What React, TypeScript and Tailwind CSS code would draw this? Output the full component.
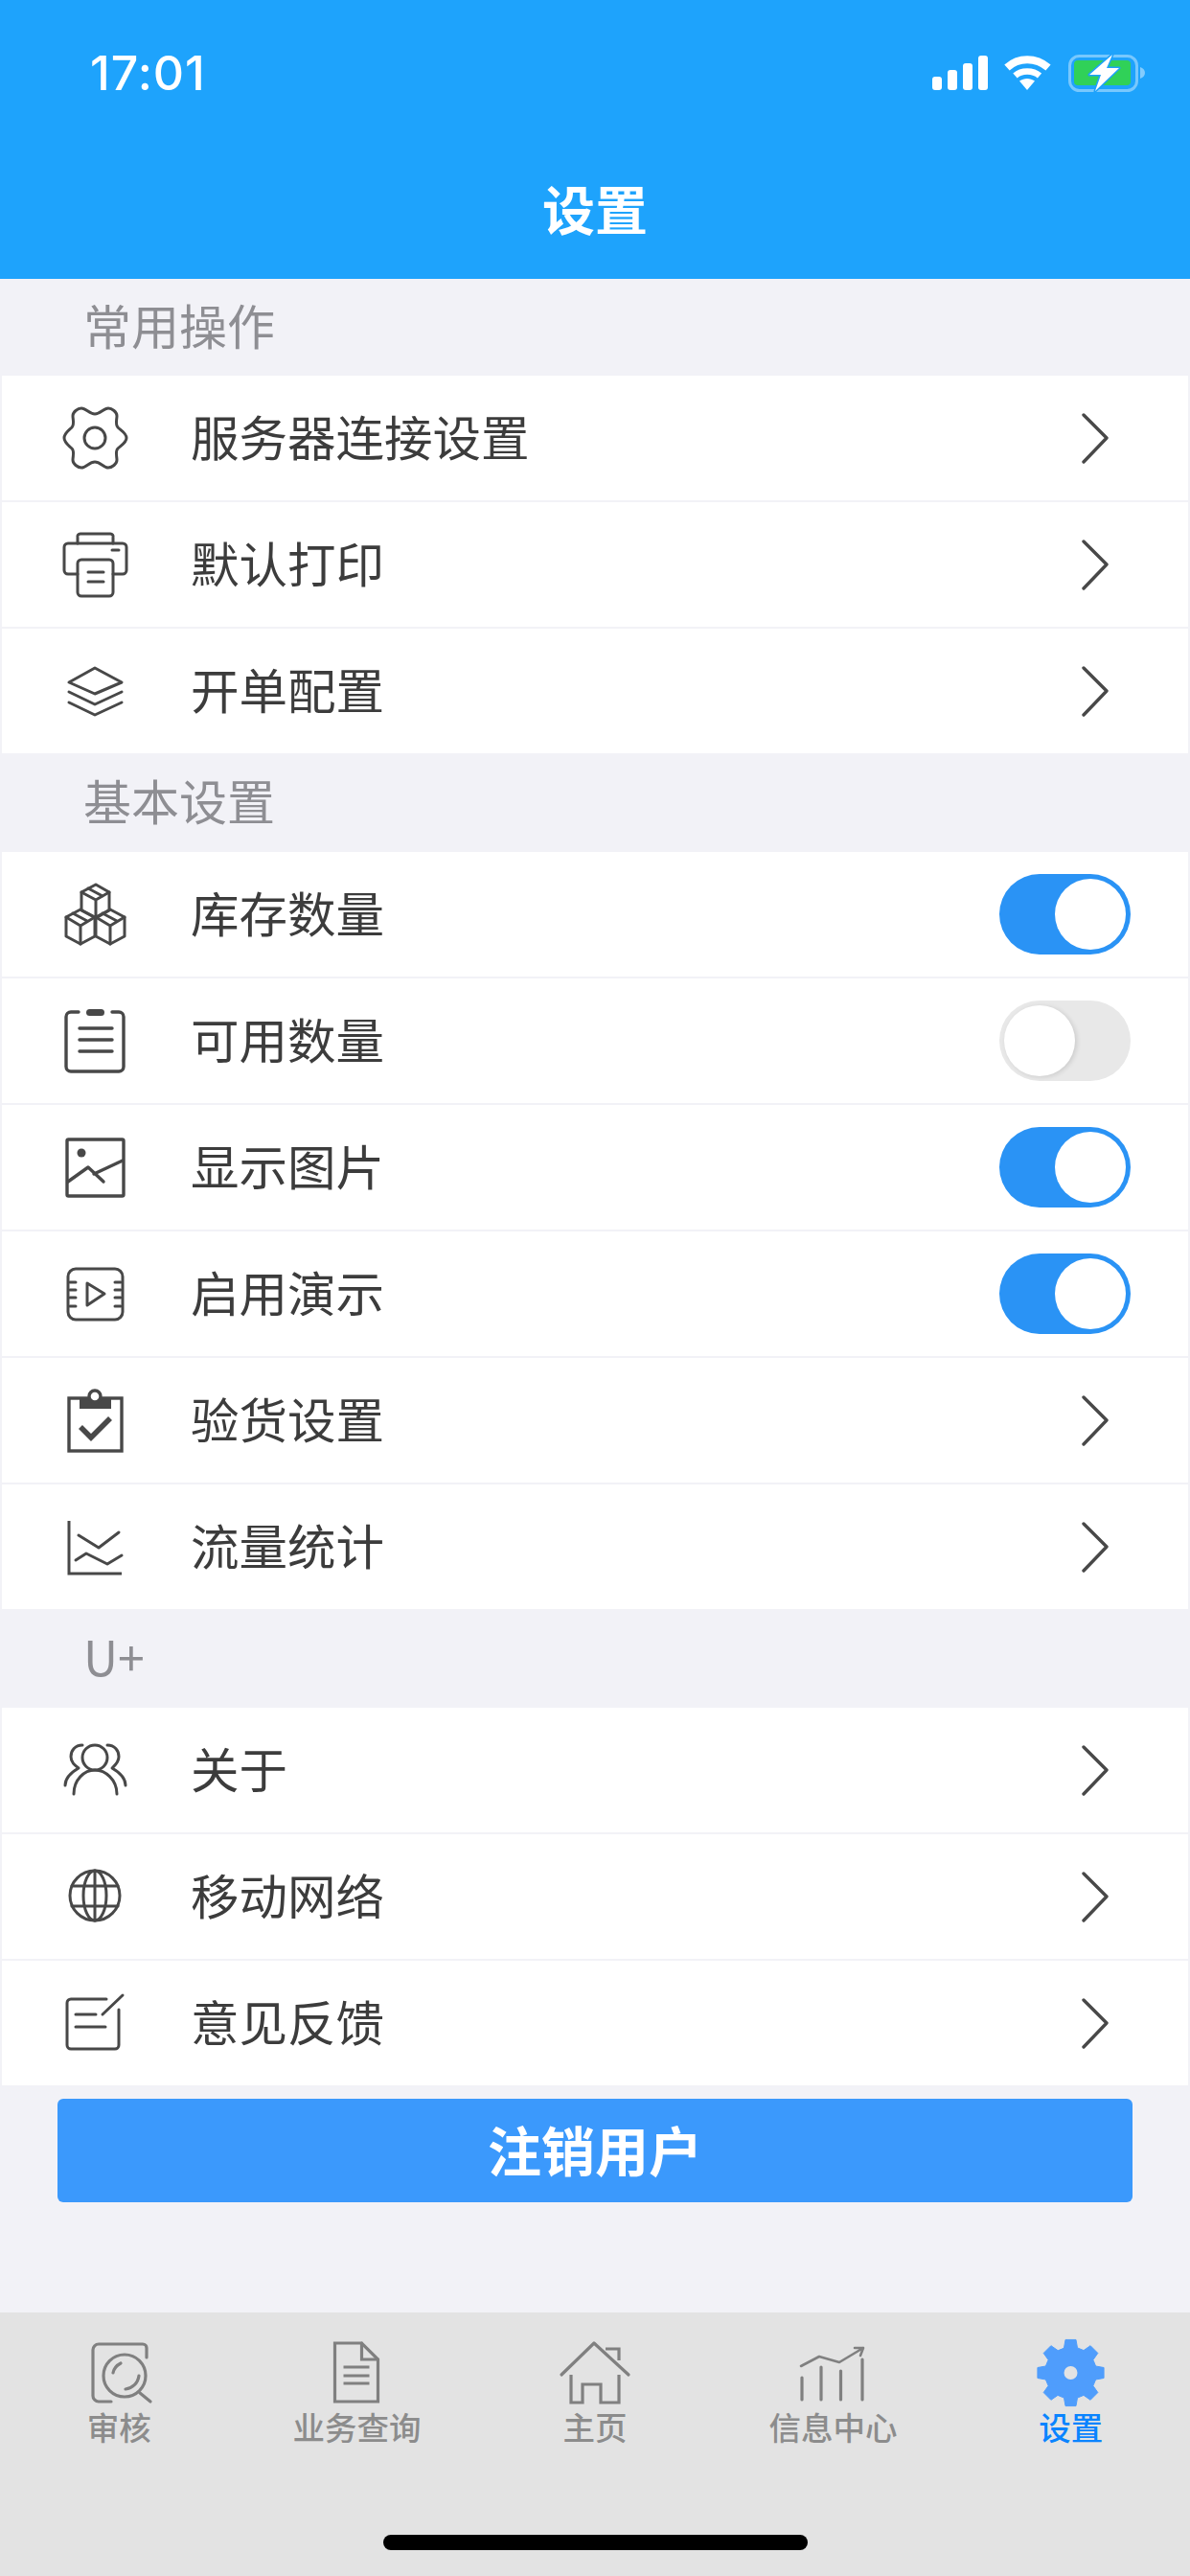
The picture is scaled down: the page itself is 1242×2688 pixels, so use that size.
import React from "react";

const CJK = "font-['Noto_Sans_CJK_SC','Noto_Sans',sans-serif]";

function solidGear(cx: number, cy: number) {
  const pts: string[] = [];
  for (let i = 0; i < 8; i++) {
    const a = (i * 45 - 90) * (Math.PI / 180);
    const d = Math.PI / 180;
    const add = (deg: number, r: number) =>
      pts.push(`${(cx + r * Math.cos(a + deg * d)).toFixed(2)} ${(cy + r * Math.sin(a + deg * d)).toFixed(2)}`);
    add(-15, 27);
    add(-9, 35);
    add(9, 35);
    add(15, 27);
  }
  return "M" + pts.join("L") + "Z";
}

const Ico = ({ cy, children }: { cy: number; children: React.ReactNode }) => (
  <svg
    className="w-[72px] h-[72px] shrink-0"
    viewBox={`63 ${cy - 36} 72 72`}
    fill="none"
    stroke="#484848"
    strokeWidth={3}
    strokeLinecap="round"
    strokeLinejoin="round"
  >
    {children}
  </svg>
);

const Chevron = () => (
  <svg className="w-[30px] h-[54px]" viewBox="0 0 30 54" fill="none" stroke="#484848" strokeWidth={3.4} strokeLinecap="round" strokeLinejoin="round">
    <path d="M3 3 L27 27 L3 52" />
  </svg>
);

const Toggle = ({ on }: { on: boolean }) =>
  on ? (
    <div className="w-[137px] h-[84px] rounded-full bg-[#2a93f5] flex items-center justify-end pr-[5px]">
      <div className="w-[74px] h-[74px] rounded-full bg-white" />
    </div>
  ) : (
    <div className="w-[137px] h-[84px] rounded-full bg-[#e8e8e8] flex items-center justify-start pl-[5px]">
      <div className="w-[74px] h-[74px] rounded-full bg-white shadow-[2px_1px_5px_rgba(0,0,0,0.12)]" />
    </div>
  );

type RowT = { label: string; icon: React.ReactNode; toggle?: boolean };

const Row = ({ label, icon, toggle }: RowT) => (
  <div className="h-[130px] mx-[2px] bg-white flex items-center pl-[61px]">
    {icon}
    <span className={`ml-[64px] pb-[6px] flex-1 text-[50.5px] leading-[60px] text-[#3c3c3c] ${CJK}`}>{label}</span>
    {toggle === undefined ? (
      <div className="mr-[82px] flex">
        <Chevron />
      </div>
    ) : (
      <div className="mr-[60px]">
        <Toggle on={toggle} />
      </div>
    )}
  </div>
);

const Section = ({ title, h, rows }: { title: string; h: string; rows: RowT[] }) => (
  <div>
    <div className={`${h} flex items-center pl-[87px] pb-[8px] text-[50px] leading-[60px] text-[#8e8e93] ${CJK}`}>{title}</div>
    <div className="flex flex-col gap-[2px]">
      {rows.map((r) => (
        <Row key={r.label} {...r} />
      ))}
    </div>
  </div>
);

const common: RowT[] = [
  {
    label: "服务器连接设置",
    icon: (
      <Ico cy={457}>
        <path d="M67 457C67 452 72 449 75 446C78 443 76 438 76 434C76 430 81 426 85 426C90 426 93 432 99 432C105 432 108 426 113 426C117 426 122 430 122 434C122 438 120 443 123 446C126 449 132 452 132 457C132 462 126 465 123 468C120 471 122 476 122 480C122 484 117 488 113 488C108 488 105 482 99 482C93 482 90 488 85 488C81 488 76 484 76 480C76 476 78 471 75 468C72 465 67 462 67 457Z" />
        <circle cx={99} cy={457} r={11} />
      </Ico>
    ),
  },
  {
    label: "默认打印",
    icon: (
      <Ico cy={589}>
        <path d="M81 567V561a3 3 0 0 1 3-4H115a3 3 0 0 1 3 4V567" />
        <path d="M81 599H71a4 4 0 0 1-4-4V571a4 4 0 0 1 4-4H128a4 4 0 0 1 4 4V595a4 4 0 0 1-4 4H118" />
        <rect x={81} y={584} width={37} height={38} rx={4} />
        <path d="M92 597H108M92 607H108M117 574H124" />
      </Ico>
    ),
  },
  {
    label: "开单配置",
    icon: (
      <Ico cy={721}>
        <path d="M72 712L99 697L127 712L99 724Z" />
        <path d="M72 722L99 735L127 722" />
        <path d="M72 733L99 746L127 733" />
      </Ico>
    ),
  },
];

const basic: RowT[] = [
  {
    label: "库存数量",
    toggle: true,
    icon: (
      <Ico cy={954}>
        <path d="M100 923L114 931V950L100 958L85 950V931Z" />
        <path d="M85 931L100 939L114 931M100 939V958M92 927L107 935" />
        <path d="M84 949L99 957V977L84 985L69 977V957Z" />
        <path d="M69 957L84 966L99 957M84 966V985M76 953L91 961" />
        <path d="M115 949L130 957V977L115 985L100 977V957Z" />
        <path d="M100 957L115 966L130 957M115 966V985M107 953L122 961" />
      </Ico>
    ),
  },
  {
    label: "可用数量",
    toggle: false,
    icon: (
      <Ico cy={1086}>
        <path d="M82 1056H74a5 5 0 0 0-5 5V1113a5 5 0 0 0 5 5H124a5 5 0 0 0 5-5V1061a5 5 0 0 0-5-5H117" strokeWidth={3.4} />
        <rect x={90} y={1053} width={19} height={7} rx={3.5} fill="#484848" stroke="none" />
        <path d="M83 1073H117M83 1085H117M83 1097H117" strokeWidth={3.4} />
      </Ico>
    ),
  },
  {
    label: "显示图片",
    toggle: true,
    icon: (
      <Ico cy={1218}>
        <rect x={70} y={1189} width={59} height={59} rx={1.5} strokeWidth={3.4} />
        <circle cx={85} cy={1203} r={4.5} fill="#484848" stroke="none" />
        <path d="M71 1233L92 1218L108 1233M98 1225L128 1211" strokeWidth={3.4} />
      </Ico>
    ),
  },
  {
    label: "启用演示",
    toggle: true,
    icon: (
      <Ico cy={1350}>
        <rect x={71} y={1324} width={57} height={53} rx={8} />
        <path d="M91 1339V1362L109 1350Z" />
        <path d="M73 1338H79M73 1346H79M73 1354H79M73 1363H79M120 1338H126M120 1346H126M120 1354H126M120 1363H126" />
      </Ico>
    ),
  },
  {
    label: "验货设置",
    icon: (
      <Ico cy={1482}>
        <rect x={72} y={1459} width={55} height={55} strokeWidth={3.4} strokeLinejoin="miter" />
        <rect x={83} y={1459} width={33} height={11} fill="#484848" stroke="none" />
        <circle cx={99} cy={1457} r={6} fill="#ffffff" strokeWidth={3.4} />
        <path d="M84 1489L95 1500L115 1480" strokeWidth={5.6} strokeLinecap="butt" strokeLinejoin="miter" />
      </Ico>
    ),
  },
  {
    label: "流量统计",
    icon: (
      <Ico cy={1614}>
        <path d="M72 1587V1642H127" strokeLinecap="butt" strokeLinejoin="miter" />
        <path d="M82 1602L103 1615L124 1599" />
        <path d="M79 1628L90 1621L112 1632L127 1623" />
      </Ico>
    ),
  },
];

const uplus: RowT[] = [
  {
    label: "关于",
    icon: (
      <Ico cy={1848}>
        <circle cx={99} cy={1835} r={13} />
        <path d="M77 1873C77 1858 88 1848 99 1848C110 1848 122 1858 122 1873" />
        <path d="M86 1822C78 1822 74 1828 74 1834C74 1840 78 1843 82 1846C75 1850 68 1855 68 1864" />
        <path d="M112 1822C120 1822 124 1828 124 1834C124 1840 120 1843 117 1846C124 1850 131 1855 131 1864" />
      </Ico>
    ),
  },
  {
    label: "移动网络",
    icon: (
      <Ico cy={1980}>
        <circle cx={99} cy={1979} r={26} />
        <ellipse cx={99} cy={1979} rx={12} ry={26} />
        <path d="M99 1953V2005M75 1969H123M75 1990H123" />
      </Ico>
    ),
  },
  {
    label: "意见反馈",
    icon: (
      <Ico cy={2112}>
        <path d="M111 2087H74a4 4 0 0 0-4 4V2135a4 4 0 0 0 4 4H120a4 4 0 0 0 4-4V2098" />
        <path d="M107 2103L128 2083M79 2103H100M79 2116H110" />
      </Ico>
    ),
  },
];

const TabIco = ({ x, children }: { x: number; children: React.ReactNode }) => (
  <svg className="w-[80px] h-[72px]" viewBox={`${x} 2440 80 72`} fill="none" stroke="#808080" strokeWidth={3.2} strokeLinecap="round" strokeLinejoin="round">
    {children}
  </svg>
);

const tabs = [
  {
    label: "审核",
    icon: (
      <TabIco x={84}>
        <path d="M153 2460V2450a4 4 0 0 0-4-4H103a6 6 0 0 0-6 6V2500a6 6 0 0 0 6 6H116" />
        <circle cx={130} cy={2479} r={22} />
        <path d="M146 2497L157 2506M118 2476C119 2471 122 2468 126 2466M131 2493C138 2492 144 2487 145 2479" />
      </TabIco>
    ),
  },
  {
    label: "业务查询",
    icon: (
      <TabIco x={332.5}>
        <path d="M349 2445H377L394 2462V2506H349Z" strokeLinejoin="miter" />
        <path d="M377 2445V2462H394" strokeLinejoin="miter" />
        <path d="M358 2470H385M358 2479H385M358 2487H385" strokeLinecap="butt" />
      </TabIco>
    ),
  },
  {
    label: "主页",
    icon: (
      <TabIco x={581}>
        <path d="M586 2478L620 2445L656 2478" />
        <path d="M596 2478V2507H608V2488H627V2507H646V2478" strokeLinecap="butt" strokeLinejoin="miter" />
        <path d="M632 2451H646V2463" strokeLinecap="butt" strokeLinejoin="miter" />
      </TabIco>
    ),
  },
  {
    label: "信息中心",
    icon: (
      <TabIco x={829}>
        <path d="M836 2469L855 2459L876 2465L901 2450M892 2450H901L898 2458" strokeWidth={2.6} />
        <path d="M837 2481V2504M857 2470V2504M877.5 2474V2504M900 2462V2504" />
      </TabIco>
    ),
  },
  {
    label: "设置",
    active: true,
    icon: (
      <TabIco x={1077.5}>
        <path d={solidGear(1117, 2476)} fill="#4f9dfc" stroke="#4f9dfc" strokeWidth={1} />
        <circle cx={1117} cy={2476} r={7} fill="#e3e3e3" stroke="none" />
      </TabIco>
    ),
  },
];

const StatusIcons = () => (
  <svg className="w-[225px] h-[40px]" viewBox="972 56 225 40">
    <g fill="#ffffff">
      <rect x={973} y={80} width={10} height={14} rx={3} />
      <rect x={989} y={73} width={10} height={21} rx={3} />
      <rect x={1005} y={66} width={10} height={28} rx={3} />
      <rect x={1021} y={58} width={10} height={36} rx={3} />
      <path d="M1064 84.5C1069 81 1075 81 1080 84.5L1072 94Z" />
    </g>
    <g fill="none" stroke="#ffffff" strokeLinecap="butt">
      <path d="M1051 70.5C1063 59.5 1081 59.5 1094 70.5" strokeWidth={8} />
      <path d="M1059.5 79C1066 73 1078 73 1085 79" strokeWidth={6.5} />
    </g>
    <rect x={1116.5} y={58.5} width={70} height={36} rx={10} fill="none" stroke="#ffffff" strokeOpacity={0.4} strokeWidth={3} />
    <path d="M1190 70C1193 71 1195 73 1195 76C1195 79 1193 81 1190 82Z" fill="#ffffff" fillOpacity={0.45} />
    <rect x={1121} y={63} width={59} height={26} rx={4} fill="#30d158" />
    <path
      d="M1161 57L1137 78H1149L1143 95L1168 71H1155Z"
      fill="#ffffff"
      stroke="#1da1fb"
      strokeWidth={3}
      paintOrder="stroke"
      strokeLinejoin="round"
    />
  </svg>
);

export default function App() {
  return (
    <div className="w-[1242px] h-[2688px] bg-[#f2f2f7] flex flex-col overflow-hidden">
      <header className="h-[291px] bg-[#1ea3fc] flex flex-col shrink-0">
        <div className="flex items-center justify-between pl-[94px] pr-[45px] pt-[46px] h-[106px]">
          <span className="text-[50px] leading-[60px] font-medium text-white font-['Inter',sans-serif] tracking-[1px]">17:01</span>
          <StatusIcons />
        </div>
        <div className={`mt-[76px] text-center text-[55px] leading-[68px] font-bold text-white ${CJK}`}>设置</div>
      </header>

      <main className="flex-1">
        <Section title="常用操作" h="h-[101px]" rows={common} />
        <Section title="基本设置" h="h-[103px]" rows={basic} />
        <Section title="U+" h="h-[103px]" rows={uplus} />
        <button className={`mt-[14px] ml-[60px] w-[1122px] h-[108px] pb-[4px] rounded-[6px] bg-[#3b99fc] text-white text-[56px] font-bold leading-[100px] ${CJK}`}>
          注销用户
        </button>
      </main>

      <nav className="h-[275px] bg-[#e3e3e3] shrink-0 flex flex-col">
        <div className="grid grid-cols-5 pt-[27px]">
          {tabs.map((t) => (
            <div key={t.label} className="flex flex-col items-center">
              {t.icon}
              <span className={`-mt-[1px] text-[33.5px] leading-[42px] font-medium ${t.active ? "text-[#0a84ff]" : "text-[#8c8c8c]"} ${CJK}`}>{t.label}</span>
            </div>
          ))}
        </div>
        <div className="mt-auto mb-[27px] self-center w-[443px] h-[16px] rounded-full bg-black" />
      </nav>
    </div>
  );
}
